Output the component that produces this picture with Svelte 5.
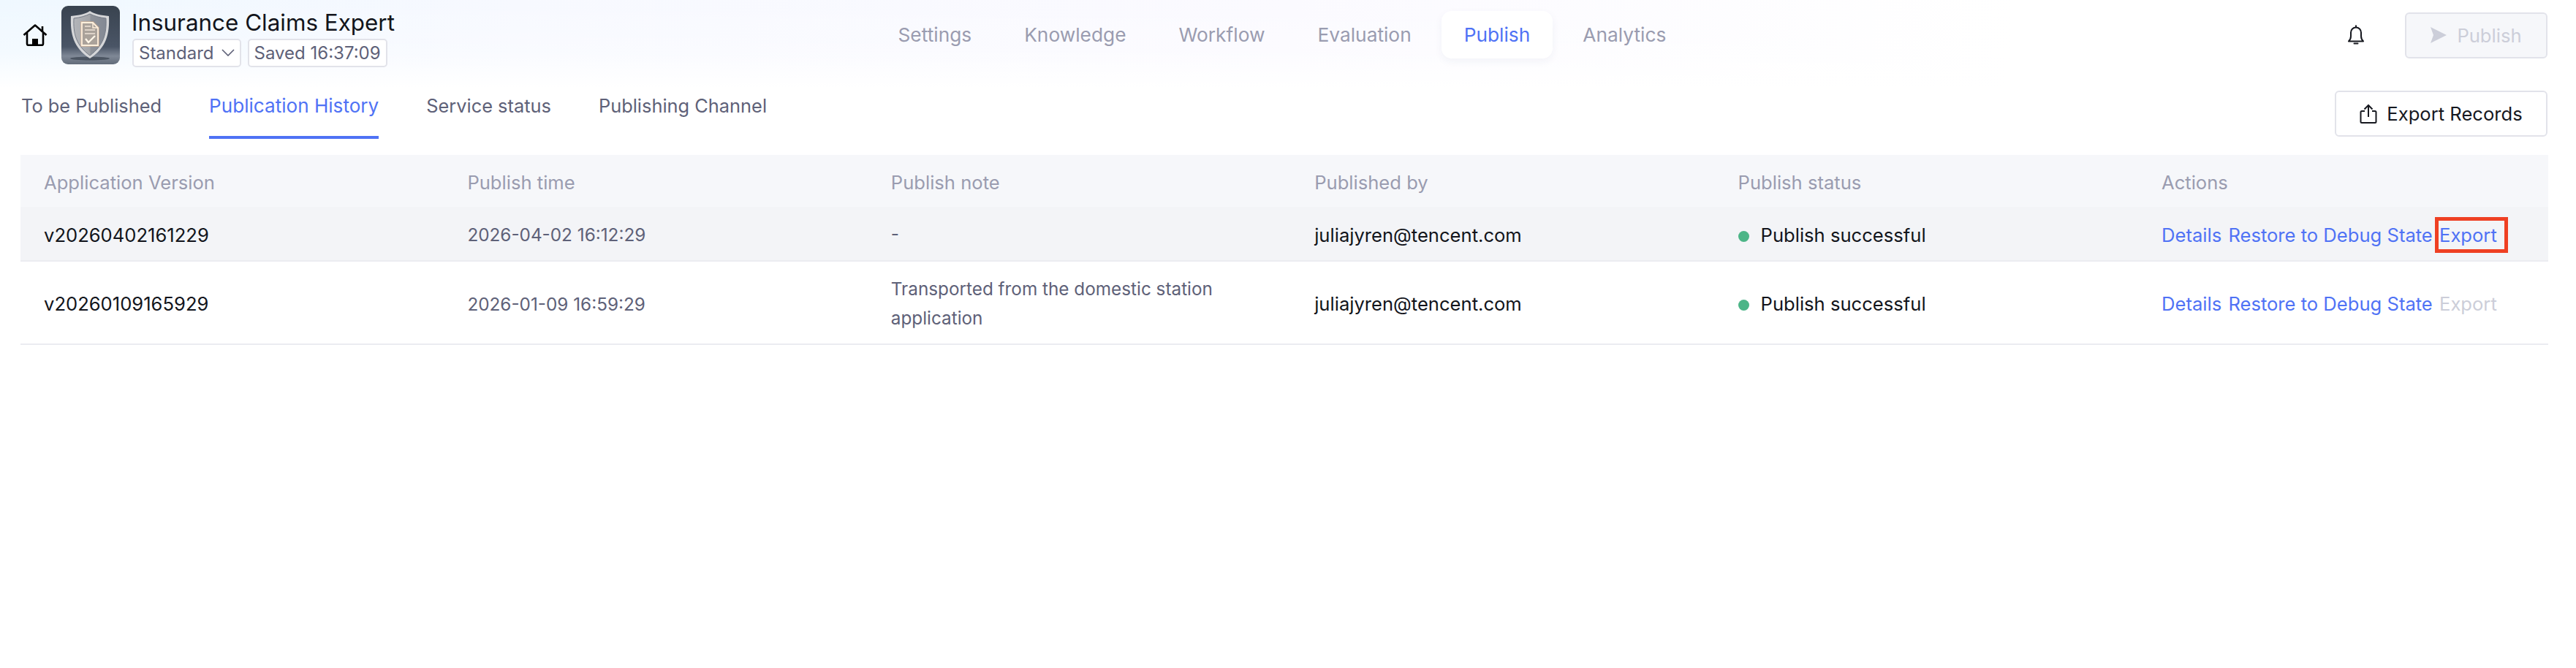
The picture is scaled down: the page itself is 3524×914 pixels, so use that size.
<script>
  const navItems = ['Settings', 'Knowledge', 'Workflow', 'Evaluation', 'Publish', 'Analytics'];
  const tabs = ['To be Published', 'Publication History', 'Service status', 'Publishing Channel'];
  const columns = ['Application Version', 'Publish time', 'Publish note', 'Published by', 'Publish status', 'Actions'];
  const rows = [
    {
      version: 'v20260402161229',
      time: '2026-04-02 16:12:29',
      note: '-',
      by: 'juliajyren@tencent.com',
      status: 'Publish successful',
      canExport: true,
    },
    {
      version: 'v20260109165929',
      time: '2026-01-09 16:59:29',
      note: 'Transported from the domestic station application',
      by: 'juliajyren@tencent.com',
      status: 'Publish successful',
      canExport: false,
    },
  ];
</script>

<div class="page">
  <header class="topbar">
    <div class="app-info">
      <svg class="home" viewBox="0 0 34 30" width="34" height="30">
        <path d="M1.5 15 17 1.5 32.5 15" fill="none" stroke="#000" stroke-width="2.6" stroke-linejoin="round" />
        <path d="M6 12v15a1.8 1.8 0 0 0 1.8 1.8h18.4A1.8 1.8 0 0 0 28 27V12" fill="none" stroke="#000" stroke-width="2.6" />
        <path d="M27 3v8" stroke="#000" stroke-width="2.6" />
        <rect x="13" y="20" width="8" height="9" fill="#000" />
      </svg>
      <svg class="logo" viewBox="0 0 80 80" width="80" height="80">
        <defs>
          <linearGradient id="bg" x1="0" y1="0" x2="0" y2="1">
            <stop offset="0" stop-color="#39434f" />
            <stop offset="0.7" stop-color="#4a5566" />
            <stop offset="0.86" stop-color="#7f8896" />
            <stop offset="1" stop-color="#626c7a" />
          </linearGradient>
          <linearGradient id="shield" x1="0" y1="0" x2="1" y2="0">
            <stop offset="0" stop-color="#b3b5b9" />
            <stop offset="0.5" stop-color="#a3a5a9" />
            <stop offset="0.52" stop-color="#8f939a" />
            <stop offset="1" stop-color="#838994" />
          </linearGradient>
        </defs>
        <rect width="80" height="80" rx="9" fill="url(#bg)" />
        <ellipse cx="39" cy="72" rx="27" ry="2.500" fill="#2f3844" opacity="0.6" />
        <path d="M39 7c6 4 15 6 26 7 1 24-3 43-26 58-23-15-27-34-26-58 11-1 20-3 26-7z" fill="#d5d6d8" />
        <path d="M39 11c6 3 13 5 22 6 1 21-3 37-22 51-19-14-23-30-22-51 9-1 16-3 22-6z" fill="url(#shield)" stroke="#767c87" stroke-width="1" />
        <path d="M28 23h15l7 7v24H28z" fill="none" stroke="#f7b77c" stroke-width="4" opacity="0.35" />
        <path d="M28 23h15l7 7v24H28z" fill="#aaa29a" stroke="#fff0dc" stroke-width="1.800" />
        <path d="M43 23v7h7" fill="none" stroke="#fff0dc" stroke-width="1.400" />
        <path d="M32 28h8M32 33h14M32 38h14" stroke="#f0e4d8" stroke-width="1.300" />
        <path d="M33 45l4 5 9-9" fill="none" stroke="#fff6e8" stroke-width="2.400" />
      </svg>
      <div class="title-block">
        <div class="title">Insurance Claims Expert</div>
        <div class="badges">
          <span class="badge">Standard
            <svg viewBox="0 0 18 10" width="18" height="10"><path d="M1 1l8 8 8-8" fill="none" stroke="#5b5e75" stroke-width="1.6" /></svg>
          </span>
          <span class="badge saved">Saved 16:37:09</span>
        </div>
      </div>
    </div>

    <nav class="nav">
      {#each navItems as item}
        <span class="nav-item" class:active={item == 'Publish'}>{item}</span>
      {/each}
    </nav>

    <div class="top-actions">
      <svg class="bell" viewBox="0 0 24 28" width="24" height="28">
        <path d="M2 22.500h20c-2-2-3-4-3-7v-5a7 7 0 0 0-14 0v5c0 3-1 5-3 7z" fill="none" stroke="#16181f" stroke-width="2" stroke-linejoin="round" />
        <path d="M12 1.200v2M9.500 25.500h5" stroke="#16181f" stroke-width="2" stroke-linecap="round" />
      </svg>
      <button class="btn publish" disabled>
        <svg viewBox="0 0 22 24" width="22" height="24"><path d="M0 1l22 11L0 23l4-11z" fill="#ccced9" /></svg>
        Publish
      </button>
    </div>
  </header>

  <div class="subbar">
    <div class="tabs">
      {#each tabs as tab}
        <span class="tab" class:active={tab == 'Publication History'}>{tab}</span>
      {/each}
    </div>
    <button class="btn export">
      <svg viewBox="0 0 24 28" width="24" height="28">
        <path d="M7 10H3a1.500 1.500 0 0 0-1.500 1.500v13A1.500 1.500 0 0 0 3 26h18a1.500 1.500 0 0 0 1.500-1.500v-13A1.500 1.500 0 0 0 21 10h-4" fill="none" stroke="#16181f" stroke-width="2" />
        <path d="M12 18V2M6.500 7.500 12 2l5.500 5.500" fill="none" stroke="#16181f" stroke-width="2" />
      </svg>
      Export Records
    </button>
  </div>

  <table class="records">
    <thead>
      <tr>
        {#each columns as col}
          <th>{col}</th>
        {/each}
      </tr>
    </thead>
    <tbody>
      {#each rows as row, i}
        <tr class:hover={i == 0}>
          <td class="strong">{row.version}</td>
          <td class="muted">{row.time}</td>
          <td class="muted note">{row.note}</td>
          <td class="strong">{row.by}</td>
          <td class="strong"><span class="dot"></span>{row.status}</td>
          <td class="actions">
            <span class="link">Details</span>
            <span class="link">Restore to Debug State</span>
            <span class="link export-link" class:disabled={!row.canExport} class:marked={row.canExport}>Export</span>
          </td>
        </tr>
      {/each}
    </tbody>
  </table>
</div>

<style>
  :global(body) {
    background: #fff;
  }
  .page {
    width: 3524px;
    min-height: 914px;
    font-family: Inter, "Noto Sans", sans-serif;
    background:
      linear-gradient(180deg, rgba(255, 255, 255, 0) 0, rgba(255, 255, 255, 0.3) 60%, #fff 100%) top / 100% 120px no-repeat,
      linear-gradient(96deg, #eff8ff 0, #f7f9ff 20%, #fbfaff 50%, #ffffff 78%) top / 100% 120px no-repeat;
  }
  .topbar {
    position: relative;
    display: flex;
    justify-content: space-between;
    align-items: center;
    height: 96px;
    padding: 0 39px 0 31px;
    box-sizing: border-box;
  }
  .app-info {
    display: flex;
    align-items: center;
  }
  .home {
    margin: 0 19px 0 0;
  }
  .logo {
    margin-right: 17px;
  }
  .title-block {
    padding-top: 6px;
  }
  .title {
    font-size: 31.400px;
    line-height: 40px;
    color: #12141b;
    margin: 0 0 2px -1px;
  }
  .badges {
    display: flex;
    gap: 9px;
  }
  .badge {
    display: flex;
    align-items: center;
    gap: 10px;
    height: 39px;
    box-sizing: border-box;
    padding: 0 7px;
    border: 2px solid #e2e3ea;
    border-radius: 5px;
    background: #fff;
    font-size: 24px;
    color: #5e6178;
  }
  .nav {
    position: absolute;
    left: 1197.500px;
    top: 15px;
    display: flex;
    gap: 10px;
  }
  .nav-item {
    padding: 0 31px;
    height: 65px;
    line-height: 65px;
    font-size: 26.300px;
    color: #9a9cb0;
    border-radius: 14px;
  }
  .nav-item.active {
    background: #fff;
    color: #4f72f5;
    box-shadow: 0 4px 12px rgba(40, 50, 120, 0.05);
  }
  .top-actions {
    display: flex;
    align-items: center;
    gap: 55px;
  }
  .btn {
    display: flex;
    align-items: center;
    justify-content: center;
    height: 63px;
    font-family: inherit;
    font-size: 25.600px;
    border: 2px solid #e2e3ea;
    border-radius: 6px;
    background: #fff;
    color: #16181f;
    padding: 0;
  }
  .publish {
    width: 195px;
    gap: 14px;
    background: #f6f7fa;
    color: #ccced9;
  }
  .export {
    width: 291px;
    gap: 13px;
    margin-top: 28px;
    align-self: flex-start;
  }
  .subbar {
    display: flex;
    justify-content: space-between;
    height: 116px;
    padding: 0 39px 0 29px;
    box-sizing: border-box;
  }
  .tabs {
    display: flex;
    gap: 65px;
    align-self: flex-start;
  }
  .tab {
    font-size: 25.400px;
    line-height: 36px;
    padding: 31px 0 23px;
    color: #5e6178;
  }
  .tab.active {
    font-size: 26.100px;
    color: #4f72f5;
    border-bottom: 4px solid #4f72f5;
  }
  .records {
    width: 3458px;
    margin-left: 28px;
    table-layout: fixed;
    border-collapse: collapse;
    font-size: 25.600px;
  }
  th {
    height: 71px;
    padding: 3px 0 0 32px;
    box-sizing: border-box;
    background: #f6f7fa;
    color: #9a9cb0;
    font-weight: 400;
    text-align: left;
  }
  th:last-child {
    width: 561px;
  }
  td {
    padding: 3px 32px 0;
    height: 74px;
    box-sizing: border-box;
    border-bottom: 2px solid #ebecf1;
    color: #12141b;
    white-space: nowrap;
  }
  .hover td {
    background: #f3f4f7;
  }
  td.muted {
    color: #5e6178;
    font-size: 24.300px;
  }
  td.note {
    white-space: normal;
    line-height: 40px;
    height: 114px;
    padding-top: 1px;
  }
  .hover td.note {
    height: 74px;
  }
  .dot {
    display: inline-block;
    width: 15px;
    height: 15px;
    border-radius: 50%;
    background: #4cb587;
    margin-right: 16px;
  }
  td.actions {
    padding-right: 0;
  }
  .link {
    color: #4f72f5;
    margin-right: 2px;
  }
  .export-link {
    position: relative;
  }
  .export-link.disabled {
    color: #ccced9;
  }
  .export-link.marked::after {
    content: '';
    position: absolute;
    left: -6px;
    right: -15px;
    top: -9px;
    bottom: -9px;
    border: 5px solid #ef4023;
  }
</style>
